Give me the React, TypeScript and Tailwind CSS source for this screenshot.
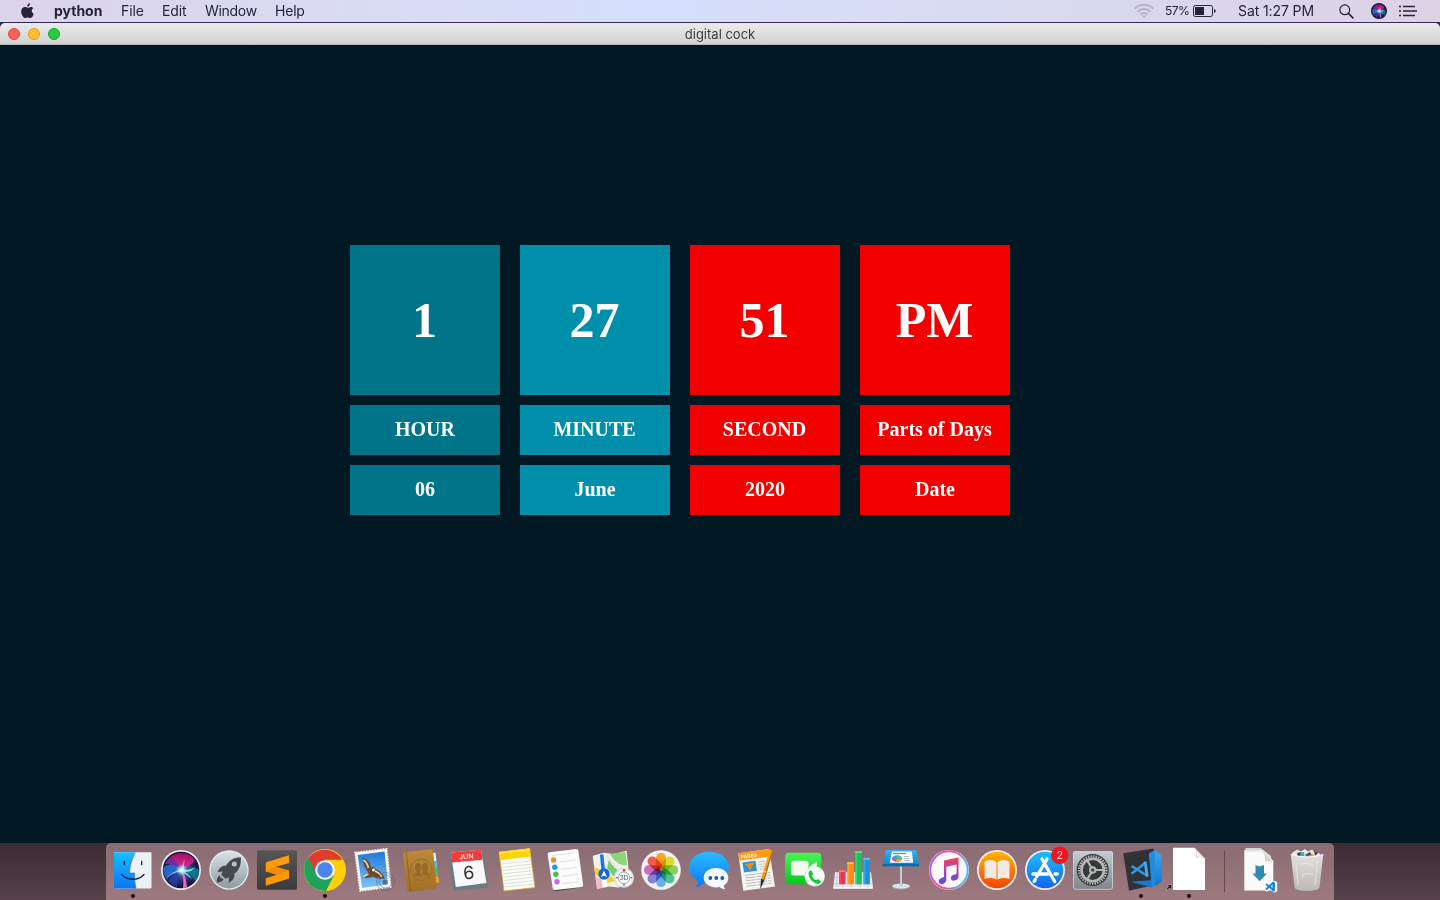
import React from "react";

type Kids = { children?: React.ReactNode };

function Cell({ children, running }: Kids & { running?: boolean }) {
  return (
    <svg className="h-[57px] w-12 shrink-0 overflow-visible" viewBox="0 0 48 57">
      {children}
      {running && <circle cx="24" cy="53" r="2.1" fill="#140708" />}
    </svg>
  );
}

function Gradients() {
  const lin: [string, string, string][] = [
    ["finder", "#16c0ff", "#0a74f5"],
    ["silver", "#d7e2e5", "#8f9ba0"],
    ["subl", "#565656", "#3b3b3b"],
    ["sky", "#2178d8", "#7cc3f5"],
    ["leather", "#bd8a3c", "#a06f25"],
    ["msg", "#2bbcff", "#0a78f8"],
    ["green", "#4df35a", "#06c91d"],
    ["board", "#35b5f0", "#0f7fc4"],
    ["book", "#ffb400", "#f3420a"],
    ["store", "#1fbdfb", "#1464f0"],
    ["prefs", "#c3ccd2", "#7f868b"],
    ["note", "#fb3d5c", "#5a4af0"],
    ["bin", "#e2dfde", "#bdb9b8"],
    ["code", "#3aa6f2", "#1273cf"],
  ];
  return (
    <svg className="absolute h-0 w-0">
      <defs>
        {lin.map(([id, a, b]) => (
          <linearGradient key={id} id={id} x1="0" y1="0" x2="0" y2="1">
            <stop offset="0" stopColor={a} />
            <stop offset="1" stopColor={b} />
          </linearGradient>
        ))}
        <linearGradient id="ringH" x1="0" y1="0.3" x2="1" y2="0.6">
          <stop offset="0" stopColor="#c055f0" />
          <stop offset="0.5" stopColor="#fb4f8c" />
          <stop offset="1" stopColor="#35c5fa" />
        </linearGradient>
        <radialGradient id="siriBase" cx="0.5" cy="0.5" r="0.5">
          <stop offset="0" stopColor="#6b74d8" />
          <stop offset="0.55" stopColor="#33307c" />
          <stop offset="1" stopColor="#11122e" />
        </radialGradient>
        <radialGradient id="glow">
          <stop offset="0" stopColor="#ffffff" />
          <stop offset="0.35" stopColor="#d8fbff" stopOpacity="0.8" />
          <stop offset="1" stopColor="#8de6ff" stopOpacity="0" />
        </radialGradient>
        <linearGradient id="siriTop" x1="0" y1="0" x2="0" y2="1">
          <stop offset="0" stopColor="#a31468" />
          <stop offset="0.6" stopColor="#e01f7e" />
          <stop offset="1" stopColor="#8a5fe0" />
        </linearGradient>
      </defs>
    </svg>
  );
}

function SiriArt() {
  return (
    <>
      <circle cx="24" cy="27" r="20" fill="#eceaf0" />
      <circle cx="24" cy="27" r="18.300" fill="url(#siriBase)" />
      <path d="M13 14c6-5 19-6 25 3-3 4-7 8-13 10-3-6-8-10-12-13z" fill="url(#siriTop)" opacity=".9" />
      <path d="M13 14c5 3 9 7 12 13-5-4-10-6-17-6 1-3 3-5 5-7z" fill="#7a2ca0" opacity=".9" />
      <path d="M6.500 24c6-4 12-2 18 3-6 1-13 5-14 10-3-3-5-8-4-13z" fill="#2372d8" opacity=".85" />
      <path d="M25 27c6-4 13-3 17 0 0 5-1 8-4 11-3-5-7-9-13-11z" fill="#137f92" opacity=".85" />
      <path d="M24 27c-5 4-10 6-13 11 2 3 5 5 9 6 1-6 1-11 4-17z" fill="#2b3fa8" opacity=".8" />
      <path d="M24 27c5 5 5 11 6 17-1 .8-2.500 1-4 1 1-6 0-12-2-18z" fill="#f66cc0" opacity=".95" />
      <path d="M9 35c5-5 10-7 15-8.500 5 .5 10 1 14-2.500-3 5-8 5-12 4.500C20 28 14 31 9 35z" fill="#8ff3f5" opacity=".95" />
      <path d="M24 27c5 2 9 5 11 9-4-3-7-5-11-7z" fill="#56f0cf" opacity=".9" />
      <path d="M24.500 27l3-11-1 11z" fill="#fff" opacity=".7" />
      <circle cx="24.500" cy="27" r="6" fill="url(#glow)" />
    </>
  );
}

function Finder() {
  return (
    <Cell running>
      <rect x="5" y="9.300" width="37.500" height="36.200" rx="1" fill="#edf1f7" />
      <path d="M5 9.300h21.200c-3 6-5.300 13-5.800 20.700h5.200c-.2 6 .2 10 1.500 15.500H5z" fill="url(#finder)" />
      <path d="M15.300 18.300v3.400M32.700 18.300v3.400" stroke="#152238" strokeWidth="1.300" strokeLinecap="round" />
      <path d="M12.500 31.500c6 6.300 17 6.300 22.500 0" fill="none" stroke="#152238" strokeWidth="1.300" strokeLinecap="round" />
      <path d="M26.200 9.300c-3 6-5.300 13-5.800 20.700h5.200c-.2 6 .2 10 1.500 15.500" fill="none" stroke="#175b9f" strokeWidth=".5" />
    </Cell>
  );
}

function Rocket() {
  return (
    <Cell>
      <circle cx="24" cy="27.300" r="20" fill="#78777d" />
      <circle cx="24" cy="27" r="19.700" fill="#e6eef0" />
      <circle cx="24" cy="27" r="18.500" fill="url(#silver)" />
      <path d="M35.800 14.200c-7 .2-11.500 3-15 8.600-4-.3-6.400 2-8.200 6.200l5-.6-1.300 3.300 4.200 4 3.400-1.400-.2 5.500c3.900-2.200 6.400-5 5.700-9 5-4 7-9 6.400-16.600z" fill="#45494d" />
      <circle cx="29.300" cy="21" r="2.500" fill="#b9c5c9" />
      <path d="M15.300 32.200c-3 .6-3.400 4-3.600 7.300 3.300-.2 6.200-1 7-3.800l-2.200.6.400-2-2.200.5z" fill="#45494d" />
    </Cell>
  );
}

function Sublime() {
  return (
    <Cell>
      <rect x="4" y="7.300" width="40" height="39.400" rx="2" fill="url(#subl)" />
      <path d="M36 12.200l-22 6.700q-1.300.5-1.300 2v7.300L36 35.500v-7.300L22.200 24 36 20z" fill="#ff9b09" />
      <path d="M12.700 28.300l22 6.700q1.300-.3 1.300-1.600v-6L22.500 23.500z" fill="#f28b05" />
      <path d="M36 27.500v7q0 1-1.400 1.500l-21.900 6.700v-7.400L27 30.800z" fill="#ff9800" />
    </Cell>
  );
}

function Chrome() {
  return (
    <Cell running>
      <circle cx="24" cy="27" r="21" fill="#fdcf0a" />
      <path d="M7 15A21 21 0 0 1 41.500 16.800H24L15 32z" fill="#df3b31" />
      <path d="M7.200 14.500A21 21 0 0 0 25 48L33 32.200H16z" fill="#1ca45c" />
      <circle cx="24" cy="27" r="9.800" fill="#f3f4f6" />
      <circle cx="24" cy="27" r="7.700" fill="#4a86ee" />
    </Cell>
  );
}

function Mail() {
  return (
    <Cell>
      <path d="M6 9.500L37.700 5.700 42 44 11 48z" fill="#f6f7f8" />
      <path d="M6 9.500L37.700 5.700 42 44 11 48z" fill="none" stroke="#f6f7f8" strokeWidth="1.600" strokeDasharray="1.500 1.300" />
      <path d="M8.800 12L35.500 8.500 39 41.600 13 45z" fill="url(#sky)" />
      <path d="M13.500 14.500c4 1 8 4 8.500 10 2-1 4 0 5 2 4 1 7 4 9 9-5 .5-9 0-12-2-3 1.500-6 2-9 1l4-5c-3-4-5-9-5.500-15z" fill="#6b4b2d" />
      <path d="M14.500 17c3 2 4 4 5 8M26 28c3 1 5 3 7 6M14.500 33.500l5-2.500" stroke="#e5d2b5" strokeWidth="1.700" fill="none" />
      <circle cx="24.500" cy="27" r="1.400" fill="#fff" />
      <g fill="none" stroke="#4d5f78" strokeWidth="1" opacity=".5">
        <circle cx="36.500" cy="38.500" r="9" />
        <circle cx="36.500" cy="38.500" r="6.500" />
      </g>
      <circle cx="36" cy="39" r="2.600" fill="#42546d" opacity=".7" />
    </Cell>
  );
}

function Contacts() {
  return (
    <Cell>
      <path d="M36 10l2.600-.2.800 8.200-3 .2z" fill="#eef3f4" />
      <path d="M37 18l2.800-.2.700 7-3 .2z" fill="#52bfd6" />
      <path d="M37.500 25.500l3-.2.800 7.500-3 .2z" fill="#3bc764" />
      <path d="M38 33.500l3.300-.2.700 6.500-3 .3z" fill="#f7a42b" />
      <path d="M7 9.200L34 6.200q1.800 0 2 1.500l3.800 36q0 1.700-1.500 2L12.500 48.800q-1.800 0-2.200-1.700L5.800 11q-.2-1.500 1.200-1.800z" fill="url(#leather)" />
      <path d="M9.300 9.100l4.300 39.500" stroke="#8a5c1c" strokeWidth=".8" />
      <circle cx="24.300" cy="27" r="10.800" fill="none" stroke="#936728" strokeWidth=".8" />
      <path d="M16 33c.5-3 3.500-2.500 3.800-4.500-3-3-2-8.500 1.200-8.500s4 5.500 1.800 8.500c0 2 2.700 2 3 4.500zM25.500 29.500c.6-.5.700-1 .7-1.500-2-3-1-8 2-8s4 5 1.700 8c0 2 3 2 3 4.500H27z" fill="#94692a" />
    </Cell>
  );
}

function CalendarIcon() {
  return (
    <Cell>
      <path d="M4.200 13l34-4 5 33.500-.3 2-34 3-1-1.500z" fill="#697b84" />
      <path d="M6 10.500q0-1 1-1.100L35 6.700q1 0 1.200 1L41.500 40 10.800 44z" fill="#f9f9f9" />
      <path d="M6 10.500q0-1 1-1.100L35 6.700q1 0 1.200 1l1.300 9L7 19.500z" fill="#f23b3c" />
      <g transform="rotate(-5 24 27)" fontFamily="Inter, sans-serif" textAnchor="middle">
        <text x="22.500" y="15.700" fontSize="7" fill="#fff">JUN</text>
        <text x="23.500" y="36" fontSize="18" fill="#333">6</text>
      </g>
    </Cell>
  );
}

function Notes() {
  return (
    <Cell>
      <path d="M6 9L36.700 5.500 42 44.500 11 48z" fill="#fbfbf7" stroke="#d2a61b" strokeWidth=".7" />
      <path d="M6 9L36.700 5.500l1.200 8L7.300 17.200z" fill="#fed408" />
      <path d="M6 9L36.700 5.500l.3 2L6.300 11z" fill="#ffe23a" />
      {[0, 1, 2, 3, 4, 5, 6, 7].map((i) => (
        <path key={i} d="M8.500 21l29.500-3.200" transform={`translate(${i * 0.45} ${i * 3.3})`} stroke="#d2d2ce" strokeWidth=".7" />
      ))}
    </Cell>
  );
}

function Reminders() {
  const dots = [[12.5, 17, "#fb8c18"], [13.8, 24.3, "#239af1"], [14.8, 31.3, "#35c93c"], [16, 38.700, "#c565e8"]] as const;
  return (
    <Cell>
      <path d="M8 11.500L37 8l5.300 36-27.500 4.500q-1.500 0-2-1.500z" fill="#4f5254" />
      <path d="M8.500 9.200L35 6q2 0 2.300 1.500L42.200 42q0 1.800-1.500 2L14 47q-2 0-2.300-2L6.600 11q0-1.600 1.900-1.800z" fill="#fcfcfd" />
      {dots.map(([x, y, c]) => (
        <g key={c}>
          <circle cx={x} cy={y} r="2.700" fill={c} />
          <path d={`M${x + 6} ${y + 2}L${x + 22} ${y}`} stroke="#d4d4d6" strokeWidth=".7" />
        </g>
      ))}
      <path d="M11 12.500l22-2.500" stroke="#d4d4d6" strokeWidth=".7" />
    </Cell>
  );
}

function Maps() {
  return (
    <Cell>
      <path d="M3.700 12.700l11-3 10 1.200 13-3.200L41 41.500l-12 3-9-1-12 2.500z" fill="#f4f1e8" />
      <path d="M21 11l15.500-2 1.500 13c-8 1-13-4-17-11z" fill="#8ad77a" />
      <path d="M18 12c3 10 9 15 21 16" fill="none" stroke="#e9e8e3" strokeWidth="4" />
      <path d="M20 17c5 9 11 13 19 14l1 4-16-2-6-8z" fill="#76ce72" />
      <path d="M5 24l13 5 9 9-9 2L6.500 31z" fill="#fcca32" />
      <path d="M6.500 34l11 4 1 6-10 1.500z" fill="#f4b7c5" />
      <path d="M13 11l3 33" stroke="#fff" strokeWidth="5" />
      <path d="M12.700 11.500L14.500 30" stroke="#1677e6" strokeWidth="3.600" />
      <circle cx="15" cy="31" r="5.700" fill="#1268d9" />
      <path d="M15 27.500l3 6.500-3-1.300-3 1.300z" fill="#fff" />
      <circle cx="35" cy="34.800" r="10" fill="#d9dedf" />
      <circle cx="35" cy="34.800" r="8.800" fill="#f8f9f9" />
      <circle cx="35" cy="34.800" r="5.800" fill="none" stroke="#89949a" strokeWidth=".8" />
      <path d="M34 28l1-2 1 2z" fill="#e5211b" stroke="#e5211b" />
      <path d="M26.800 34.800h2m12.500 0h2M35 41v2" stroke="#4a5055" />
      <text x="35" y="37.200" fontSize="6.500" fontFamily="Inter, sans-serif" textAnchor="middle" fill="#495157">3D</text>
    </Cell>
  );
}

function Photos() {
  const petals = ["#fb9a12", "#dcd91c", "#7fcb44", "#38bd8b", "#5ba6e8", "#7a72d2", "#c45fb6", "#f04a3a"];
  return (
    <Cell>
      <circle cx="24" cy="27.300" r="20" fill="#98959a" />
      <circle cx="24" cy="27" r="19.700" fill="#f4f3f4" />
      <g className="isolate">
        {petals.map((c, i) => (
          <rect key={c} x="19.200" y="10" width="9.600" height="16.500" rx="4.600" fill={c} fillOpacity=".9" className="mix-blend-multiply" transform={`rotate(${i * 45} 24 27)`} />
        ))}
      </g>
    </Cell>
  );
}

function Messages() {
  return (
    <Cell>
      <path d="M24 8.700c11 0 20 6.800 20 15.700s-9 16-20 16c-2 0-3.600-.2-5.200-.6-2 2.700-4.800 4.200-8 4.200 2-2 2.600-4 2.500-6C7.600 35 4 30 4 24.400 4 15.500 13 8.700 24 8.700z" fill="url(#msg)" />
      <path d="M31 25c7 0 12.300 4.200 12.300 9.800 0 3.400-1.700 6-4.600 7.600 0 1.600.7 2.700 2 3.800-2.700 0-4.800-.9-6-2.200-1.200.3-2.300.4-3.700.4-7 0-12.300-4.200-12.300-9.600S24 25 31 25z" fill="#f5faff" />
      <g fill="#1b5c9c">
        <circle cx="25.300" cy="35" r="1.900" />
        <circle cx="31.300" cy="35" r="1.900" />
        <circle cx="37.300" cy="35" r="1.900" />
      </g>
    </Cell>
  );
}

function Pages() {
  return (
    <Cell>
      <path d="M5.300 10.300L36 6l6 37.500-31.700 4.200z" fill="#f4f4f2" />
      <path d="M5.300 10.300L36 6l1.400 7.500L6.800 17.500z" fill="#ff9a12" />
      <text x="8" y="15.800" fontSize="5" fontWeight="700" fontFamily="Inter, sans-serif" fill="#fff0d2" transform="rotate(-7 8 15.800)">PAGES</text>
      <path d="M9.500 19.500l13-1.700 1.500 10-13 1.700z" fill="#2795df" />
      <path d="M12 21l9-1.500-3.500 8z" fill="#f38a14" />
      {[0, 1, 2, 3, 4].map((i) => (
        <path key={i} d="M12 32.500l25-3.200" transform={`translate(${i * 0.4} ${i * 2.7})`} stroke="#b5b7b8" strokeWidth=".9" strokeDasharray="10 1" />
      ))}
      <path d="M25 19l7-.8M25.500 21.500l7-.8M26 24l6-.8M26.500 26.500l5-.8" stroke="#b5b7b8" strokeWidth=".8" />
      <path d="M37 6.500l3 1-8.500 29.500-3.500-1.300z" fill="#f5a21a" />
      <path d="M39 7l1.200.5-8.700 29.500-1.300-.4z" fill="#b96908" />
      <path d="M28 35.700l3.500 1.300-4.300 9.300z" fill="#27303a" />
      <path d="M30.300 28l3.300 1.200" stroke="#f4e9d2" />
    </Cell>
  );
}

function FaceTime() {
  return (
    <Cell>
      <rect x="4" y="9.700" width="36.300" height="31.600" rx="4" fill="url(#green)" />
      <rect x="10" y="17.800" width="17.500" height="14.600" rx="2.500" fill="#f1fbf1" />
      <path d="M28.500 23.500l7.300-5v14l-7.300-5z" fill="#f1fbf1" />
      <circle cx="33.700" cy="33.500" r="10.200" fill="#b9c6bd" />
      <circle cx="33.700" cy="33.200" r="9.900" fill="#f6faf7" />
      <path d="M28 28.500c1-1.500 2.400-1.500 3 0l1 2c.4 1-1 1.500-.8 2.400.6 2 1.900 3.400 3.600 4.200.9.300 1.400-1.200 2.400-.8l2 1.200c1.200.8.900 2-.6 3-1.500.8-3.600.5-6.500-1.700-3.400-2.800-5.500-7.500-4.100-10.300z" fill="#19c83a" />
    </Cell>
  );
}

function Numbers() {
  const bars = [[10, 27.3, "#f0324f", "#fb7b87"], [18.3, 19.3, "#fb8d13", "#ffc15a"], [26.3, 8.3, "#13c657", "#63e88d"], [34.3, 15, "#1a91e3", "#6ac5fa"]] as const;
  return (
    <Cell>
      <path d="M6 29.300h36l2 14.700H4.300z" fill="#e9eaf0" />
      <path d="M4.300 44h39.500v1.800H4.300z" fill="#fff" />
      <path d="M8 30v14M4.500 40.800h39M6 34.500h36.500M13 41v4M22 41v4M31 41v4M39 41v4" stroke="#b9bbc4" strokeWidth=".6" />
      {bars.map(([x, y, c, t]) => (
        <g key={c}>
          <rect x={x} y={y} width="6.600" height={41.200 - y} rx=".6" fill={c} />
          <rect x={x} y={y} width="6.600" height="1.700" rx=".6" fill={t} />
          <rect x={x} y={y} width="2" height={41.200 - y} fill={t} opacity=".4" />
        </g>
      ))}
    </Cell>
  );
}

function Keynote() {
  return (
    <Cell>
      <ellipse cx="24" cy="43.800" rx="8.900" ry="2.800" fill="#9ba8b2" />
      <ellipse cx="24" cy="43" rx="8.700" ry="2.500" fill="#dbe3e9" />
      <path d="M24 23v20" stroke="#c3ced6" strokeWidth="2" />
      <path d="M9 7h30l3.200 14v2.300H5.700V21z" fill="url(#board)" />
      <path d="M5.700 21h36.500v2.300H5.700z" fill="#0b6aab" />
      <path d="M15 8.500h19.800l1.400 11.300H12.700z" fill="#f8fbfd" />
      <path d="M16 10.500h13" stroke="#7b8790" strokeWidth="1.200" />
      <ellipse cx="20" cy="15.500" rx="5" ry="3.300" fill="#31a8ec" />
      <path d="M20 15.500v-3.300a5 3.300 0 0 1 4.500 4.500z" fill="#4fc953" />
      <path d="M20 15.500l4.500 1.200a5 3.300 0 0 1-6 1.900z" fill="#fb9b1b" />
      <path d="M20 15.500l-1.500 3.100a5 3.300 0 0 1-3.500-3z" fill="#e344a6" />
      <path d="M27 13.500h5M27 15.500h5.500M27 17.500h6" stroke="#adb8c0" strokeWidth=".9" />
    </Cell>
  );
}

function Music() {
  return (
    <Cell>
      <circle cx="24" cy="27" r="20" fill="#f1e9f3" />
      <circle cx="24" cy="27" r="18.700" fill="#fcfafc" stroke="url(#ringH)" strokeWidth="1.900" />
      <path d="M19 17.600L33.500 14.500V33.300c0 2.400-1.700 3.900-4 4.300-2.300.3-3.700-.9-3.700-2.600 0-1.900 1.500-3 3.600-3.500 1.500-.3 2.200-.5 2.200-1.700V21.500l-10.300 2.200v13c0 2.300-1.600 3.800-3.900 4.200-2.200.3-3.700-.8-3.700-2.500 0-1.900 1.500-3.100 3.500-3.600 1.200-.3 1.800-.6 1.800-1.700z" fill="url(#note)" />
    </Cell>
  );
}

function Books() {
  return (
    <Cell>
      <circle cx="24" cy="27" r="20" fill="#f5eee9" />
      <circle cx="24" cy="27" r="18.300" fill="url(#book)" />
      <path d="M11.500 18.500c4-2.300 9-2.200 12 .7v17.500c-3-2.200-8-2.300-12-.6zM24.500 19.200c3-2.900 8-3 12-.7v17.600c-4-1.700-9-1.600-12 .6z" fill="#f3ebe3" />
    </Cell>
  );
}

function AppStore() {
  return (
    <Cell>
      <circle cx="24" cy="27" r="20" fill="#eef0f5" />
      <circle cx="24" cy="27" r="18.300" fill="url(#store)" />
      <g stroke="#fff" strokeWidth="3.300" strokeLinecap="round" fill="none">
        <path d="M26 16L15.800 33.500M21 16l12.700 22.500M12 31h15M34 31h2.300M14.300 36.500l-1.200 1.800" />
      </g>
      <circle cx="38.700" cy="12.300" r="8.700" fill="#f5121b" />
      <text x="38.700" y="16" fontSize="10.500" textAnchor="middle" fontFamily="Inter, sans-serif" fill="#fff">2</text>
    </Cell>
  );
}

function Prefs() {
  return (
    <Cell>
      <rect x="4" y="8.300" width="40" height="38.500" rx="2" fill="url(#prefs)" />
      <rect x="4.500" y="8.800" width="39" height="37.500" rx="2" fill="none" stroke="#dce1e3" strokeWidth=".7" />
      <circle cx="23.700" cy="27" r="16" fill="#37393b" />
      <circle cx="23.700" cy="27" r="13.600" fill="none" stroke="#b2b4b4" strokeWidth="2.400" strokeDasharray="1.500 1.060" />
      <circle cx="23.700" cy="27" r="11.200" fill="none" stroke="#b7b9b9" strokeWidth="2.600" />
      <path d="M23.700 27H35M23.700 27l-5.600-9.800M23.700 27l-5.600 9.800" stroke="#b7b9b9" strokeWidth="2.200" />
      <circle cx="23.700" cy="27" r="3.700" fill="#b7b9b9" />
      <circle cx="23.700" cy="27" r="1.800" fill="#47494a" />
    </Cell>
  );
}

function VSCode() {
  return (
    <Cell running>
      <path d="M6.300 10.200L36.500 5.600l1 4 4 31.500-29.500 6.700z" fill="#303236" />
      <path d="M32 10.500l5.500-3L44 11.500 44.800 38.500 34.700 44.500 13.500 38.700l21.300-1.500z" fill="url(#code)" />
      <path d="M32 10.500l5.500-3 .7 34.500-3.500 2.500z" fill="#1e8de0" />
      <path d="M28.700 19.500L14.500 30.800M14.500 23l15.800 9.700" stroke="#3199e3" strokeWidth="2.500" />
      <path d="M28 18.500l2.300 15" stroke="#42acf3" strokeWidth="2.800" />
    </Cell>
  );
}

function DocumentIcon() {
  return (
    <Cell running>
      <path d="M8 4.800h21.500L40 15.500V47H8z" fill="#fff" />
      <path d="M29.500 4.800L40 16c-2.500-1.500-5-2-9-1.500.7-4 .3-7-1.500-9.700z" fill="#cfcfcf" />
      <path d="M30.500 6.500l7.500 8c-2.500-.8-4-1-6-.7.400-2.800 0-5-1.500-7.300z" fill="#f5f5f5" />
      <path d="M1.700 48c-.2-2.400.6-3.700 2-4.500L2.300 42l4.400-.3-.5 4.500-1.300-1.300c-1.400.6-2.200 1.500-3.200 3.100z" fill="#191313" stroke="#e1d5d4" strokeWidth=".4" />
    </Cell>
  );
}

function Downloads() {
  return (
    <Cell>
      <path d="M9.500 5h15L35 13v30H9.500z" fill="#dcdcdc" />
      <path d="M8.300 7h19l10 11v29.500h-29z" fill="#fbfbfb" />
      <path d="M10 6h15l9 8M8.500 8h17l10 9" stroke="#c7c7c7" strokeWidth=".7" fill="none" />
      <path d="M27 9l10.300 11c-3-2-5.500-2-8.500-1.700.5-3.500 0-6.300-1.800-9.300z" fill="#d1d1d1" />
      <path d="M19.500 22l4.200 1.400L28 22v8.500h3L23.700 38.200 16.500 30.500h3z" fill="#2f8bb0" />
      <path d="M30 40.300l2.500-1 3 2.500 3.800-3.500 2.400 1V48l-2.400 1.300-4-3.600-3.200 2.500-2.100-1.200 1.500-3.200z" transform="translate(-1 0)" fill="#fff" stroke="#fff" />
      <g transform="translate(-1 0)">
        <path d="M31 41l7.500 6M31 46.500l7.500-7" stroke="#1683d8" strokeWidth="1.900" />
        <path d="M38.700 39.200v9" stroke="#1683d8" strokeWidth="2.500" />
      </g>
    </Cell>
  );
}

function Trash() {
  return (
    <svg className="-ml-px h-[57px] w-[47px] shrink-0 overflow-visible" viewBox="0 0 47 57">
      <path d="M9 10l5-3.500 4 2 4-2.500 3 2.500 4-2 3 3 5 1-1 5H9z" fill="#e9e7ea" />
      <path d="M14 10l4-1 1 3-4 2zM22 12l5-3 2 4zM31 8l4 2-3 3z" fill="#463e43" />
      <path d="M17 10l4-1 .5 4-4 .5z" fill="#20bda5" />
      <path d="M26 12l4-1 1 3-5 .6z" fill="#f18723" />
      <path d="M22 13l3-2 1 3z" fill="#3457b8" />
      <path d="M7.800 11.500q16 5 32.500 0L36.500 44q-.4 2-3 2.700-9.500 2.400-19 0-2.600-.6-3-2.700z" fill="url(#bin)" />
      <path d="M7.800 11.500q16 5 32.500 0" fill="none" stroke="#f8f8f8" strokeWidth="1.200" />
      <path d="M13 19l2 23M17 22q7-4 14 1M19 33q5-4 11-1M34.500 18L32 42" fill="none" stroke="#eeeceb" strokeWidth="1.300" opacity=".6" />
      <path d="M19 39q6 4 10 1" stroke="#e5b9a9" fill="none" strokeWidth="1" opacity=".5" />
    </svg>
  );
}

const menuFont = "font-['Inter','Liberation_Sans',sans-serif]";

function MenuBar() {
  return (
    <header className={`flex h-[23px] shrink-0 items-center border-b border-[#35285f] bg-linear-to-r from-[#dcd4e9] via-[#d6e0fc] via-45% to-[#dcd2e4] text-[14px] leading-[22px] text-[#25233a] ${menuFont}`}>
      <svg className="ml-[21px] h-4 w-[13px] shrink-0" viewBox="0 0 13 16" fill="#25233a">
        <path d="M9.100 0c.1 1.900-1.200 3.600-2.900 3.800C6 2 7.300.3 9.100 0zM12.300 5.300c-2.200 1.400-1.900 4.400.5 5.500-.7 2-2 4.300-3.500 4.300-1 0-1.400-.6-2.600-.6s-1.700.6-2.600.6C2.500 15.100.2 11.700.2 8.500c0-2.900 1.800-4.500 3.700-4.500 1.200 0 1.900.7 2.900.7.900 0 1.700-.8 3.100-.8 1 0 1.800.5 2.400 1.400z" />
      </svg>
      <span className="ml-5 w-[67px] font-bold">python</span>
      <span className="w-[41px] tracking-[-0.1px]">File</span>
      <span className="w-[43px] tracking-[-0.1px]">Edit</span>
      <span className="w-[70px] tracking-[-0.3px]">Window</span>
      <span className="tracking-[-0.2px]">Help</span>
      <div className="ml-auto flex items-center">
        <svg className="h-4 w-5" viewBox="0 0 20 16" fill="none" stroke="#b3b0c6" strokeWidth="1.900">
          <path d="M.8 5.600c5.200-5 13.200-5 18.400 0M3.700 8.600c3.600-3.400 9-3.400 12.600 0M6.600 11.500c2-1.800 4.800-1.800 6.800 0" />
          <path d="M8.200 13l1.800 1.900 1.800-1.900c-1-1-2.600-1-3.600 0z" fill="#b3b0c6" stroke="none" />
        </svg>
        <span className="ml-[11px] w-7 text-[12px] tracking-[-0.6px]">57%</span>
        <svg className="h-3 w-6" viewBox="0 0 24 12">
          <rect x=".5" y=".5" width="19" height="11" rx="1.800" fill="none" stroke="#25233a" />
          <rect x="2" y="2" width="9" height="8" fill="#25233a" />
          <path d="M21 4q1.700.5 1.700 2T21 8z" fill="#25233a" />
        </svg>
        <span className="ml-[21px] w-[77px] whitespace-nowrap tracking-[-0.1px]">Sat 1:27 PM</span>
        <svg className="ml-6 h-[15px] w-[15px]" viewBox="0 0 15 15" fill="none" stroke="#25233a" strokeWidth="1.200">
          <circle cx="5.800" cy="5.800" r="4.900" />
          <path d="M9.400 9.400l5 5" strokeWidth="1.500" />
        </svg>
        <svg className="ml-[17px] h-4 w-4" viewBox="4 7 40 40">
          <SiriArt />
          <circle cx="24" cy="27" r="18.500" fill="none" stroke="#15163a" strokeWidth="3" />
        </svg>
        <svg className="mr-[23px] ml-3 h-3 w-[18px]" viewBox="0 0 18 12" stroke="#25233a" strokeWidth="1.600">
          <path d="M0 1.500h2M4 1.500h12M0 6h2M4 6h14M0 10.500h2M4 10.500h12" />
        </svg>
      </div>
    </header>
  );
}

function TitleBar() {
  return (
    <div className="bg-[#35285f]">
      <div className={`flex h-[22px] items-center rounded-t-[5px] border-b border-[#b9b9b9] bg-linear-to-b from-[#ebebeb] to-[#d2d2d2] px-2 ${menuFont}`}>
        <div className="flex w-20 gap-2">
          <i className="size-3 rounded-full border border-[#e2463f] bg-[#ff5f57]" />
          <i className="size-3 rounded-full border border-[#e1a116] bg-[#ffbd2e]" />
          <i className="size-3 rounded-full border border-[#12ac28] bg-[#28ca41]" />
        </div>
        <h1 className="flex-1 pt-px text-center text-[13px] leading-[20px] text-[#3c3c3c]">digital cock</h1>
        <div className="w-20" />
      </div>
    </div>
  );
}

const columns = [
  { value: "1", label: "HOUR", date: "06", color: "bg-[#007589]", text: "px-0" },
  { value: "27", label: "MINUTE", date: "June", color: "bg-[#008fab]", text: "pr-px" },
  { value: "51", label: "SECOND", date: "2020", color: "bg-[#f20000]", text: "pr-px" },
  { value: "PM", label: "Parts of Days", date: "Date", color: "bg-[#f20000]", text: "pr-px" },
];

function Clock() {
  return (
    <main className="flex flex-1 gap-5 bg-[#021822] pt-[200px] pl-[350px] font-['Liberation_Serif',serif] font-bold text-white">
      {columns.map((c) => (
        <section key={c.label} className="flex w-[150px] flex-col gap-2.5 text-center">
          <div className={`h-[150px] pr-px text-[50px] leading-[150px] ${c.color}`}>{c.value}</div>
          <div className={`h-[50px] text-[20px] leading-[49px] ${c.text} ${c.color}`}>{c.label}</div>
          <div className={`h-[50px] text-[20px] leading-[49px] ${c.color}`}>{c.date}</div>
        </section>
      ))}
    </main>
  );
}

function Dock() {
  return (
    <footer className="flex h-[57px] shrink-0 justify-center bg-linear-to-b from-[#3b2b34] to-[#56424a]">
      <div className="flex w-[1228px] rounded-t-[5px] bg-linear-to-b from-[#8a6b74] to-[#9d7a7e] px-[3px]">
        <Finder />
        <Cell><SiriArt /></Cell>
        <Rocket />
        <Sublime />
        <Chrome />
        <Mail />
        <Contacts />
        <CalendarIcon />
        <Notes />
        <Reminders />
        <Maps />
        <Photos />
        <Messages />
        <Pages />
        <FaceTime />
        <Numbers />
        <Keynote />
        <Music />
        <Books />
        <AppStore />
        <Prefs />
        <VSCode />
        <DocumentIcon />
        <div className="mt-2 mr-[11px] ml-[11px] h-[41px] w-px shrink-0 bg-[#634951]" />
        <Downloads />
        <Trash />
      </div>
    </footer>
  );
}

export default function App() {
  return (
    <div className="flex h-[900px] w-[1440px] flex-col overflow-hidden bg-[#021822]">
      <Gradients />
      <MenuBar />
      <TitleBar />
      <Clock />
      <Dock />
    </div>
  );
}
